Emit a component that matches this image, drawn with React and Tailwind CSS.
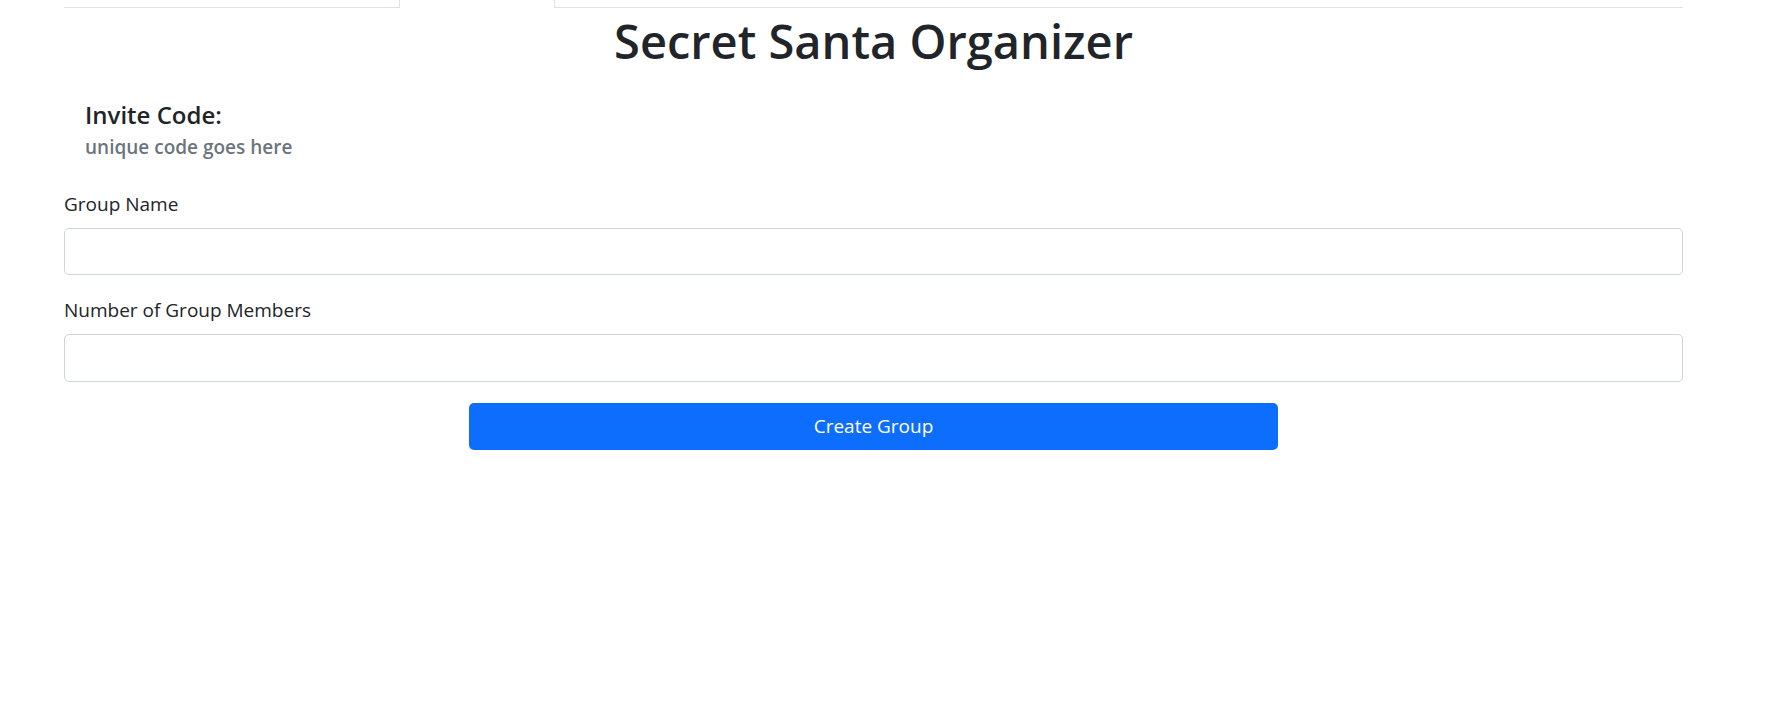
export default function App() {
  return (
    <div className="min-h-screen bg-white text-[#212529] font-['Open_Sans',sans-serif]">
      <div className="ml-[64px] mr-[94px]">
        {/* tab strip, scrolled past */}
        <div className="flex h-[8px]">
          <div className="w-[335px] border-b border-[#dee2e6]" />
          <div className="w-[156px] border-x border-[#dee2e6]" />
          <div className="flex-1 border-b border-[#dee2e6]" />
        </div>

        <h1 className="mt-[3px] text-center text-[47px] font-semibold leading-[60px]">Secret Santa Organizer</h1>

        <div className="px-[21px] pt-[29px] pb-[31px]">
          <h5 className="text-[24px] font-semibold leading-[30px]">Invite Code:</h5>
          <h6 className="mt-[5px] text-[19px] font-semibold leading-[24px] text-[#6c757d]">unique code goes here</h6>
        </div>

        <form className="flex flex-col">
          <label className="mb-[10px] text-[19px] leading-[28px]">Group Name</label>
          <input type="text" className="h-[47px] w-full rounded-[5px] border border-[#ced4da] px-[15px] text-[19px] outline-none" />

          <label className="mt-[21px] mb-[10px] text-[19px] leading-[28px]">Number of Group Members</label>
          <input type="number" className="h-[48px] w-full rounded-[5px] border border-[#ced4da] px-[15px] text-[19px] outline-none" />

          <div className="mt-[21px] flex justify-center">
            <button type="button" className="h-[47px] w-1/2 rounded-[5px] bg-[#0d6efd] text-[19px] text-white">
              Create Group
            </button>
          </div>
        </form>
      </div>
    </div>
  );
}
